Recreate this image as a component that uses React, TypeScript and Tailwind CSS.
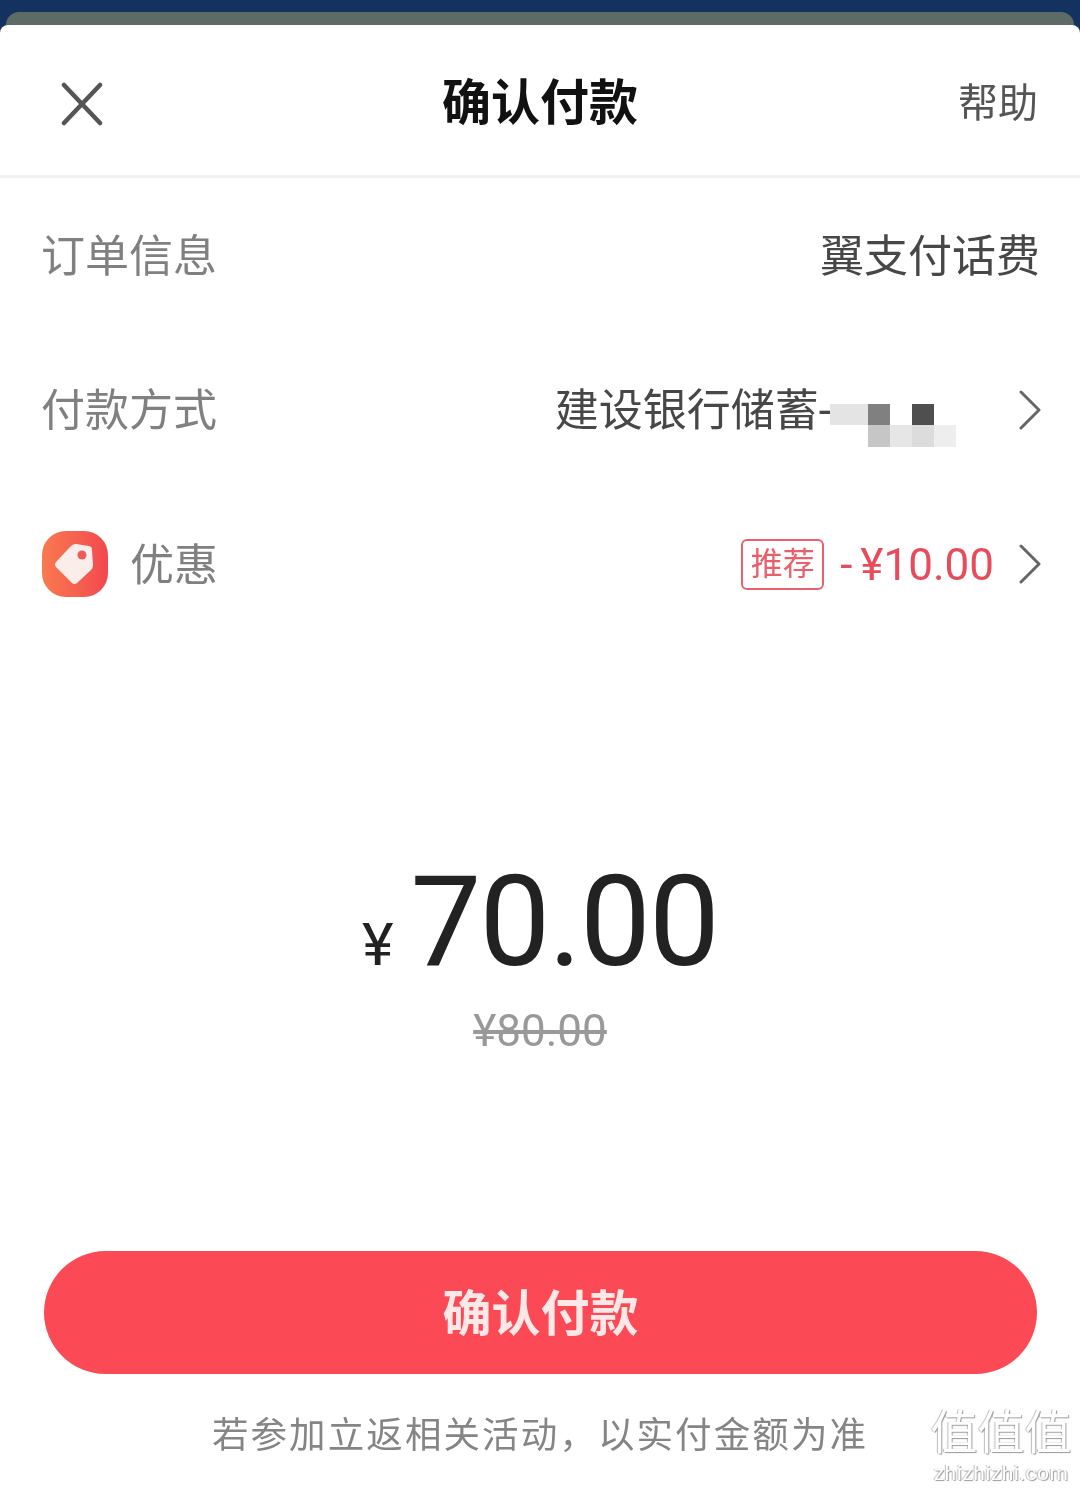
import { ReactNode } from 'react'

const cjk = "font-['Roboto','Noto_Sans_CJK_SC',sans-serif]"

function Chevron() {
  return (
    <svg width="24" height="40" viewBox="0 0 24 40" fill="none" className="shrink-0 mr-[-2px]">
      <path d="M3 2 L21 20 L3 38" stroke="#666666" strokeWidth="3" strokeLinecap="round" strokeLinejoin="round" />
    </svg>
  )
}

function TagIcon() {
  return (
    <div className="ml-[1px] w-[66px] h-[66px] rounded-[24px] bg-gradient-to-r from-[#f9794f] to-[#f2474f]">
      <svg width="66" height="66" viewBox="0 0 66 66">
        <path d="M14 31 L29 15 Q31 13 34 13 L47 15 Q50 15.500 50 19 L51 34 Q51 37 49 39 L35 52 Q32 54 30 52 L14 36 Q12 33.500 14 31 Z" fill="#fbeeea" />
        <circle cx="40" cy="24" r="4.500" fill="#ee5a5e" />
      </svg>
    </div>
  )
}

function Row({ left, right }: { left: ReactNode; right: ReactNode }) {
  return (
    <div className="h-[154.500px] flex items-center justify-between pl-[41px] pr-[40px]">
      <div className="flex items-center gap-[22px] text-[44px] leading-none text-[#808080]">{left}</div>
      <div className="flex items-center text-[44px] leading-none text-[#474747]">{right}</div>
    </div>
  )
}

// pixelated card number mask
const maskCells = [
  'bg-[#e4e4e4]', 'bg-[#e4e4e4]', 'bg-[#808080]', 'bg-white', 'bg-[#4f4f4f]', 'bg-white',
  'bg-white', 'bg-white', 'bg-[#c6c6c6]', 'bg-[#e6e6e6]', 'bg-[#dcdcdc]', 'bg-[#eeeeee]',
]

export default function App() {
  return (
    <div className={`w-[1080px] h-[1489px] relative overflow-hidden bg-[#14325f] blur-[0.6px] ${cjk}`}>
      <div className="h-[25px] pt-[12px] px-[6px]">
        <div className="h-[13px] rounded-t-[14px] bg-[#5d6a65]" />
      </div>

      <div className="h-[1464px] bg-white rounded-t-[8px]">
        <div className="h-[153px] pt-[7px] border-b-[3px] border-[#f1f1f1] relative flex items-center justify-between pl-[60px] pr-[42px]">
          <svg width="44" height="44" viewBox="0 0 44 44" fill="none">
            <path d="M4 3 L40 41 M40 3 L4 41" stroke="#555555" strokeWidth="4.500" strokeLinecap="round" />
          </svg>
          <span className="absolute left-0 right-0 text-center text-[49px] leading-none font-bold text-[#111111]">确认付款</span>
          <span className="text-[40px] leading-none text-[#555555]">帮助</span>
        </div>

        <Row left={<span className="pt-[3px]">订单信息</span>} right={<span className="pt-[3px]">翼支付话费</span>} />
        <Row
          left={<span className="pt-[3px]">付款方式</span>}
          right={
            <>
              <span className="pt-[3px]">建设银行储蓄-</span>
              <div className="grid grid-cols-[16px_22px_22px_22px_22px_22px] auto-rows-[21.500px] mt-[31px] ml-[-1px] mr-[62px]">
                {maskCells.map((cell, i) => (
                  <div key={i} className={cell} />
                ))}
              </div>
              <Chevron />
            </>
          }
        />
        <Row
          left={
            <>
              <TagIcon />
              <span className="pt-[3px]">优惠</span>
            </>
          }
          right={
            <>
              <span className="w-[83px] h-[51px] border-2 border-[#e8606c] rounded-[6px] flex items-center justify-center text-[32px] text-[#e8606c]">推荐</span>
              <span className="ml-[16px] mr-[24px] pt-[2px] text-[#e84c5c]">
                <span className="mr-[8px]">-</span>¥10.00
              </span>
              <Chevron />
            </>
          }
        />

        <div className="mt-[217px] flex flex-col items-center">
          <div className="flex items-baseline text-[#222222]">
            <span className="text-[60px] leading-none mr-[17px]">¥</span>
            <span className="text-[126px] leading-none tracking-[-1.800px]">70.00</span>
          </div>
          <span className="mt-[24px] text-[44px] leading-none line-through text-[#999999]">¥80.00</span>
        </div>

        <div className="mt-[198px] ml-[44px] mr-[43px] h-[123px] pt-[6px] rounded-full bg-[#fb4a55] flex items-center justify-center text-[49px] font-bold text-[#fde8e8]">确认付款</div>

        <div className="mt-[44px] text-center text-[36.500px] leading-none tracking-[2.100px] text-[#858585]">若参加立返相关活动，以实付金额为准</div>
      </div>

      <div className="absolute left-[928px] top-[1409px] w-[146px] flex flex-col items-center text-white [text-shadow:1px_1px_1px_#9a9a9a,-1px_0_1px_#bbbbbb]">
        <span className="text-[47px] leading-none">值值值</span>
        <span className="mt-[7px] text-[21px] leading-none tracking-[0.5px]">zhizhizhi.com</span>
      </div>
    </div>
  )
}
